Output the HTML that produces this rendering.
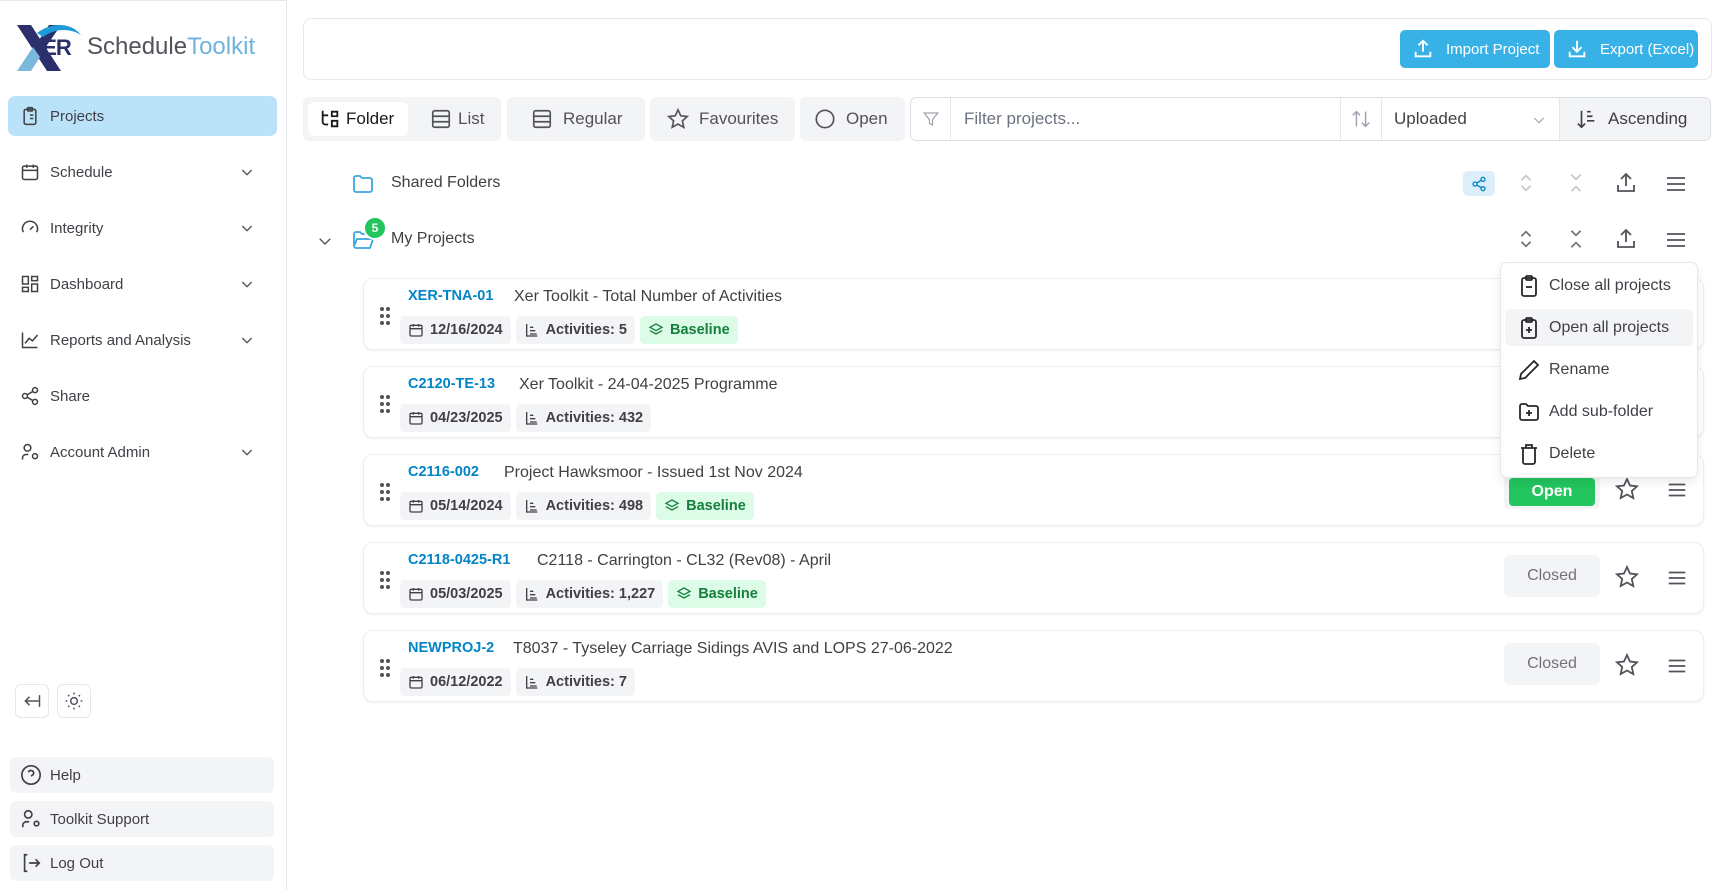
<!DOCTYPE html>
<html><head><meta charset="utf-8"><style>
*{box-sizing:border-box;margin:0;padding:0}
body{width:1724px;height:890px;background:#fff;font-family:"Liberation Sans",sans-serif;color:#3f3f46;position:relative;overflow:hidden}
.abs{position:absolute}
svg{display:block}
.side{position:absolute;left:0;top:0;width:287px;height:890px;border-right:1px solid #e5e7eb;border-top:1px solid #e5e7eb}
.nav{position:absolute;left:8px;width:269px;height:40px;display:flex;align-items:center;padding-left:12px;font-size:15px;color:#3f3f46}
.nav svg{margin-right:10px}
.chev{position:absolute;right:12px;top:12px}
.bot{position:absolute;left:10px;width:264px;height:36px;background:#f3f4f6;border-radius:6px;display:flex;align-items:center;padding-left:10px;font-size:15px}
.bot svg{margin-right:8px}
.tb{position:absolute;top:97px;height:44px;background:#f3f4f6;border-radius:6px;display:flex;align-items:center;font-size:17px;color:#52525b}
.card{position:absolute;left:363px;width:1341px;height:72px;border:1px solid #eceef1;border-radius:10px;box-shadow:0 1px 2px rgba(0,0,0,.06);background:#fff}
.code{position:absolute;left:44px;top:9px;font-size:14.5px;font-weight:bold;color:#0284c7}
.title{position:absolute;top:9px;font-size:16px;color:#3f3f46}
.chips{position:absolute;left:36px;top:37px;display:flex;gap:5px}
.chip{height:28px;background:#f3f4f6;border-radius:5px;padding:0 8px;display:flex;align-items:center;font-size:14.5px;font-weight:bold;color:#3f3f46;gap:6px}
.chip.g{background:#dcfce7;color:#15803d}
.drag{position:absolute;left:15px;top:27px}
.stat{position:absolute;left:1140px;top:12px;width:96px;height:42px;border-radius:6px;background:#f3f4f6;display:flex;align-items:center;justify-content:center;font-size:16px;color:#71717a}
.star{position:absolute;left:1251px;top:22px}
.menu{position:absolute;left:1302px;top:24px}
.mi{position:absolute;left:1505px;width:188px;height:37px;display:flex;align-items:center;padding-left:12px;font-size:16px;color:#3f3f46;border-radius:5px}
.mi svg{margin-right:8px}
</style></head><body>

<div class="side">
  <div class="abs" style="left:15px;top:22px">
    <svg width="70" height="50" viewBox="0 0 70 50">
      <path d="M2 2h14l30 46H32z" fill="#2b2f6b"/>
      <path d="M2 48l16-24 7 10-9 14z" fill="#7ab8dc"/>
      <path d="M22 20 34 2h12L28 28z" fill="#2b2f6b"/>
      <path d="M22 10C35 0 55 -2 66 12C55 5 40 5 28 14z" fill="#1e9ad6"/>
    </svg>
  </div>
  <div class="abs" style="left:32px;top:34px;font-size:22px;font-weight:bold;color:#2b2f6b;letter-spacing:-1px">&nbsp;&nbsp;ER</div>
  <div class="abs" style="left:87px;top:32px;font-size:24px;color:#52525b">Schedule<span style="color:#6fb3dc">Toolkit</span></div>

  <div class="nav" style="top:95px;background:#bae2f8;border-radius:7px;height:40px">
    <svg width="20" height="20" viewBox="0 0 24 24" fill="none" stroke="#3f3f46" stroke-width="1.8"><rect x="5" y="4" width="14" height="18" rx="2"/><rect x="9" y="2" width="6" height="4" rx="1"/><path d="M9 11h.01M12 11h4M9 15h.01M12 15h4"/></svg>Projects</div>
  <div class="nav" style="top:151px"><svg width="20" height="20" viewBox="0 0 24 24" fill="none" stroke="#3f3f46" stroke-width="1.8"><rect x="3" y="5" width="18" height="16" rx="2"/><path d="M3 10h18M8 3v4M16 3v4"/></svg>Schedule<svg class="chev" width="16" height="16" viewBox="0 0 24 24" fill="none" stroke="#52525b" stroke-width="2"><path d="M5 9l7 7 7-7"/></svg></div>
  <div class="nav" style="top:207px"><svg width="20" height="20" viewBox="0 0 24 24" fill="none" stroke="#3f3f46" stroke-width="1.8"><path d="M4 17a9 9 0 1 1 16 0"/><path d="M12 14l4-4"/></svg>Integrity<svg class="chev" width="16" height="16" viewBox="0 0 24 24" fill="none" stroke="#52525b" stroke-width="2"><path d="M5 9l7 7 7-7"/></svg></div>
  <div class="nav" style="top:263px"><svg width="20" height="20" viewBox="0 0 24 24" fill="none" stroke="#3f3f46" stroke-width="1.8"><rect x="3" y="3" width="7" height="9"/><rect x="14" y="3" width="7" height="5"/><rect x="14" y="12" width="7" height="9"/><rect x="3" y="16" width="7" height="5"/></svg>Dashboard<svg class="chev" width="16" height="16" viewBox="0 0 24 24" fill="none" stroke="#52525b" stroke-width="2"><path d="M5 9l7 7 7-7"/></svg></div>
  <div class="nav" style="top:319px"><svg width="20" height="20" viewBox="0 0 24 24" fill="none" stroke="#3f3f46" stroke-width="1.8"><path d="M3 3v18h18"/><path d="M6 16l5-6 4 3 6-7"/></svg>Reports and Analysis<svg class="chev" width="16" height="16" viewBox="0 0 24 24" fill="none" stroke="#52525b" stroke-width="2"><path d="M5 9l7 7 7-7"/></svg></div>
  <div class="nav" style="top:375px"><svg width="20" height="20" viewBox="0 0 24 24" fill="none" stroke="#3f3f46" stroke-width="1.8"><circle cx="18" cy="5" r="3"/><circle cx="6" cy="12" r="3"/><circle cx="18" cy="19" r="3"/><path d="M8.6 13.5l6.8 4M15.4 6.5l-6.8 4"/></svg>Share</div>
  <div class="nav" style="top:431px"><svg width="20" height="20" viewBox="0 0 24 24" fill="none" stroke="#3f3f46" stroke-width="1.8"><circle cx="9" cy="7" r="4"/><path d="M3 21v-2a4 4 0 0 1 4-4h3"/><circle cx="18" cy="17" r="3"/></svg>Account Admin<svg class="chev" width="16" height="16" viewBox="0 0 24 24" fill="none" stroke="#52525b" stroke-width="2"><path d="M5 9l7 7 7-7"/></svg></div>

  <div class="abs" style="left:15px;top:683px;width:34px;height:34px;border:1px solid #e5e7eb;border-radius:6px;display:flex;align-items:center;justify-content:center"><svg width="20" height="20" viewBox="0 0 24 24" fill="none" stroke="#52525b" stroke-width="1.8"><path d="M20 12H4M9 7l-5 5 5 5M21 5v14"/></svg></div>
  <div class="abs" style="left:57px;top:683px;width:34px;height:34px;border:1px solid #e5e7eb;border-radius:6px;display:flex;align-items:center;justify-content:center"><svg width="20" height="20" viewBox="0 0 24 24" fill="none" stroke="#52525b" stroke-width="1.8"><circle cx="12" cy="12" r="4"/><path d="M12 2v2M12 20v2M4.9 4.9l1.4 1.4M17.7 17.7l1.4 1.4M2 12h2M20 12h2M4.9 19.1l1.4-1.4M17.7 6.3l1.4-1.4"/></svg></div>

  <div class="bot" style="top:756px"><svg width="22" height="22" viewBox="0 0 24 24" fill="none" stroke="#3f3f46" stroke-width="1.8"><circle cx="12" cy="12" r="10"/><path d="M9.1 9a3 3 0 0 1 5.8 1c0 2-3 3-3 3M12 17h.01"/></svg>Help</div>
  <div class="bot" style="top:800px"><svg width="22" height="22" viewBox="0 0 24 24" fill="none" stroke="#3f3f46" stroke-width="1.8"><circle cx="9" cy="7" r="4"/><path d="M3 21v-2a4 4 0 0 1 4-4h3"/><circle cx="18" cy="17" r="2.5"/></svg>Toolkit Support</div>
  <div class="bot" style="top:844px"><svg width="22" height="22" viewBox="0 0 24 24" fill="none" stroke="#3f3f46" stroke-width="1.8"><path d="M8 3H5v18h3M10 12h11M17 8l4 4-4 4"/></svg>Log Out</div>
</div>

<!-- top panel -->
<div class="abs" style="left:303px;top:18px;width:1409px;height:62px;border:1px solid #e5e7eb;border-radius:8px"></div>
<div class="abs" style="left:1400px;top:30px;width:150px;height:38px;background:#38b2e6;border-radius:5px;color:#fff;font-size:15px;display:flex;align-items:center;padding-left:12px;gap:12px"><svg width="22" height="22" viewBox="0 0 24 24" fill="none" stroke="#fff" stroke-width="2"><path d="M4 15v5h16v-5M12 15V3M7 8l5-5 5 5"/></svg>Import Project</div>
<div class="abs" style="left:1554px;top:30px;width:144px;height:38px;background:#38b2e6;border-radius:5px;color:#fff;font-size:15px;display:flex;align-items:center;padding-left:12px;gap:12px"><svg width="22" height="22" viewBox="0 0 24 24" fill="none" stroke="#fff" stroke-width="2"><path d="M4 15v5h16v-5M12 3v12M7 10l5 5 5-5"/></svg>Export (Excel)</div>

<!-- toolbar -->
<div class="tb" style="left:303px;width:198px">
  <div style="position:absolute;left:5px;top:5px;width:100px;height:34px;background:#fff;border-radius:6px"></div>
  <div style="position:absolute;left:16px;top:11px;display:flex;align-items:center;gap:5px;color:#18181b"><svg width="22" height="22" viewBox="0 0 24 24" fill="none" stroke="#18181b" stroke-width="2"><path d="M4 3v12a3 3 0 0 0 3 3h3M4 8h6M14 4h6v5h-6zM14 14h6v6h-6z"/></svg>Folder</div>
  <div style="position:absolute;left:127px;top:11px;display:flex;align-items:center;gap:6px"><svg width="22" height="22" viewBox="0 0 24 24" fill="none" stroke="#52525b" stroke-width="1.8"><rect x="3" y="3" width="18" height="18" rx="2"/><path d="M3 9h18M3 15h18"/></svg>List</div>
</div>
<div class="tb" style="left:507px;width:138px;padding-left:24px;gap:10px"><svg width="22" height="22" viewBox="0 0 24 24" fill="none" stroke="#52525b" stroke-width="1.8"><rect x="3" y="3" width="18" height="18" rx="2"/><path d="M3 9h18M3 15h18"/></svg>Regular</div>
<div class="tb" style="left:650px;width:145px;padding-left:17px;gap:10px"><svg width="22" height="22" viewBox="0 0 24 24" fill="none" stroke="#52525b" stroke-width="1.8"><path d="M12 2l3 6.5 7 .8-5.2 4.8 1.5 7L12 17.5 5.7 21l1.5-7L2 9.3l7-.8z"/></svg>Favourites</div>
<div class="tb" style="left:800px;width:105px;padding-left:14px;gap:10px"><svg width="22" height="22" viewBox="0 0 24 24" fill="none" stroke="#52525b" stroke-width="1.8"><circle cx="12" cy="12" r="9.5"/></svg>Open</div>

<div class="abs" style="left:910px;top:97px;width:801px;height:44px;border:1px solid #dcdfe3;border-radius:6px;overflow:hidden;font-size:17px">
  <div class="abs" style="left:0;top:0;width:40px;height:42px;border-right:1px solid #e5e7eb;display:flex;align-items:center;justify-content:center"><svg width="18" height="18" viewBox="0 0 24 24" fill="none" stroke="#9ca3af" stroke-width="1.6"><path d="M3 4h18l-7 9v7l-4-2v-5z"/></svg></div>
  <div class="abs" style="left:53px;top:11px;color:#6b7280">Filter projects...</div>
  <div class="abs" style="left:429px;top:0;width:42px;height:42px;border-left:1px solid #e5e7eb;border-right:1px solid #e5e7eb;display:flex;align-items:center;justify-content:center"><svg width="22" height="22" viewBox="0 0 24 24" fill="none" stroke="#9ca3af" stroke-width="1.6"><path d="M7 20V4M3 8l4-4 4 4M17 4v16M13 16l4 4 4-4"/></svg></div>
  <div class="abs" style="left:483px;top:11px;color:#3f3f46">Uploaded</div>
  <svg class="abs" style="left:620px;top:14px" width="16" height="16" viewBox="0 0 24 24" fill="none" stroke="#9ca3af" stroke-width="1.8"><path d="M5 9l7 7 7-7"/></svg>
  <div class="abs" style="left:648px;top:0;width:153px;height:42px;background:#f3f4f6;border-left:1px solid #e5e7eb;display:flex;align-items:center;padding-left:16px;gap:10px;color:#3f3f46"><svg width="22" height="22" viewBox="0 0 24 24" fill="none" stroke="#3f3f46" stroke-width="1.8"><path d="M6 3v18M2 17l4 4 4-4M12 4h4M12 9h6M12 14h8"/></svg>Ascending</div>
</div>

<!-- folder rows -->
<svg class="abs" style="left:351px;top:172px" width="24" height="24" viewBox="0 0 24 24" fill="none" stroke="#3aa6dc" stroke-width="1.8"><path d="M3 6a2 2 0 0 1 2-2h4l2 2h8a2 2 0 0 1 2 2v10a2 2 0 0 1-2 2H5a2 2 0 0 1-2-2z"/></svg>
<div class="abs" style="left:391px;top:174px;font-size:16px;color:#3f3f46">Shared Folders</div>
<div class="abs" style="left:1463px;top:171px;width:32px;height:25px;background:#dbeefa;border-radius:5px;display:flex;align-items:center;justify-content:center"><svg width="16" height="16" viewBox="0 0 24 24" fill="none" stroke="#0284c7" stroke-width="2"><circle cx="18" cy="5" r="3"/><circle cx="6" cy="12" r="3"/><circle cx="18" cy="19" r="3"/><path d="M8.6 13.5l6.8 4M15.4 6.5l-6.8 4"/></svg></div>

<svg class="abs" style="left:316px;top:232px" width="18" height="18" viewBox="0 0 24 24" fill="none" stroke="#52525b" stroke-width="1.8"><path d="M5 9l7 7 7-7"/></svg>
<svg class="abs" style="left:351px;top:228px" width="24" height="24" viewBox="0 0 24 24" fill="none" stroke="#3aa6dc" stroke-width="1.8"><path d="M3 18V6a2 2 0 0 1 2-2h4l2 2h7a2 2 0 0 1 2 2v2M3 18l3-7h16l-3 9H5a2 2 0 0 1-2-2z"/></svg>
<div class="abs" style="left:363px;top:216px;width:24px;height:24px;border-radius:50%;background:#22c55e;border:2px solid #fff;color:#fff;font-size:12px;font-weight:bold;display:flex;align-items:center;justify-content:center">5</div>
<div class="abs" style="left:391px;top:230px;font-size:16px;color:#3f3f46">My Projects</div>

<!-- row icons -->
<svg class="abs" style="left:1515px;top:172px" width="22" height="22" viewBox="0 0 24 24" fill="none" stroke="#c4c7cc" stroke-width="1.8"><path d="M7 9l5-5 5 5M7 15l5 5 5-5"/></svg>
<svg class="abs" style="left:1565px;top:172px" width="22" height="22" viewBox="0 0 24 24" fill="none" stroke="#c4c7cc" stroke-width="1.8"><path d="M7 3l5 5 5-5M7 21l5-5 5 5"/></svg>
<svg class="abs" style="left:1614px;top:171px" width="24" height="24" viewBox="0 0 24 24" fill="none" stroke="#52525b" stroke-width="1.8"><path d="M4 14v6h16v-6M12 15V3M7 8l5-5 5 5"/></svg>
<svg class="abs" style="left:1664px;top:172px" width="24" height="24" viewBox="0 0 24 24" fill="none" stroke="#52525b" stroke-width="1.8"><path d="M3 6h18M3 12h18M3 18h18"/></svg>

<svg class="abs" style="left:1515px;top:228px" width="22" height="22" viewBox="0 0 24 24" fill="none" stroke="#71717a" stroke-width="1.8"><path d="M7 9l5-5 5 5M7 15l5 5 5-5"/></svg>
<svg class="abs" style="left:1565px;top:228px" width="22" height="22" viewBox="0 0 24 24" fill="none" stroke="#71717a" stroke-width="1.8"><path d="M7 3l5 5 5-5M7 21l5-5 5 5"/></svg>
<svg class="abs" style="left:1614px;top:227px" width="24" height="24" viewBox="0 0 24 24" fill="none" stroke="#52525b" stroke-width="1.8"><path d="M4 14v6h16v-6M12 15V3M7 8l5-5 5 5"/></svg>
<svg class="abs" style="left:1664px;top:228px" width="24" height="24" viewBox="0 0 24 24" fill="none" stroke="#52525b" stroke-width="1.8"><path d="M3 6h18M3 12h18M3 18h18"/></svg>

<!-- cards -->
<div class="card" style="top:278px">
  <svg class="drag" width="12" height="20" viewBox="0 0 12 20" fill="#52525b"><circle cx="3" cy="3" r="2"/><circle cx="9" cy="3" r="2"/><circle cx="3" cy="10" r="2"/><circle cx="9" cy="10" r="2"/><circle cx="3" cy="17" r="2"/><circle cx="9" cy="17" r="2"/></svg>
  <div class="code">XER-TNA-01</div><div class="title" style="left:150px">Xer Toolkit - Total Number of Activities</div>
  <div class="chips"><div class="chip"><svg width="16" height="16" viewBox="0 0 24 24" fill="none" stroke="#3f3f46" stroke-width="2"><rect x="3" y="5" width="18" height="16" rx="2"/><path d="M3 10h18M8 3v4M16 3v4"/></svg>12/16/2024</div><div class="chip"><svg width="16" height="16" viewBox="0 0 24 24" fill="none" stroke="#3f3f46" stroke-width="2"><path d="M4 3v18h16M9 8h5M9 13h8M9 18h10"/></svg>Activities: 5</div><div class="chip g"><svg width="16" height="16" viewBox="0 0 24 24" fill="none" stroke="#15803d" stroke-width="2"><path d="M12 3l9 5-9 5-9-5zM3 13l9 5 9-5"/></svg>Baseline</div></div>
</div>
<div class="card" style="top:366px">
  <svg class="drag" width="12" height="20" viewBox="0 0 12 20" fill="#52525b"><circle cx="3" cy="3" r="2"/><circle cx="9" cy="3" r="2"/><circle cx="3" cy="10" r="2"/><circle cx="9" cy="10" r="2"/><circle cx="3" cy="17" r="2"/><circle cx="9" cy="17" r="2"/></svg>
  <div class="code">C2120-TE-13</div><div class="title" style="left:155px">Xer Toolkit - 24-04-2025 Programme</div>
  <div class="chips"><div class="chip"><svg width="16" height="16" viewBox="0 0 24 24" fill="none" stroke="#3f3f46" stroke-width="2"><rect x="3" y="5" width="18" height="16" rx="2"/><path d="M3 10h18M8 3v4M16 3v4"/></svg>04/23/2025</div><div class="chip"><svg width="16" height="16" viewBox="0 0 24 24" fill="none" stroke="#3f3f46" stroke-width="2"><path d="M4 3v18h16M9 8h5M9 13h8M9 18h10"/></svg>Activities: 432</div></div>
</div>
<div class="card" style="top:454px">
  <svg class="drag" width="12" height="20" viewBox="0 0 12 20" fill="#52525b"><circle cx="3" cy="3" r="2"/><circle cx="9" cy="3" r="2"/><circle cx="3" cy="10" r="2"/><circle cx="9" cy="10" r="2"/><circle cx="3" cy="17" r="2"/><circle cx="9" cy="17" r="2"/></svg>
  <div class="code">C2116-002</div><div class="title" style="left:140px">Project Hawksmoor - Issued 1st Nov 2024</div>
  <div class="chips"><div class="chip"><svg width="16" height="16" viewBox="0 0 24 24" fill="none" stroke="#3f3f46" stroke-width="2"><rect x="3" y="5" width="18" height="16" rx="2"/><path d="M3 10h18M8 3v4M16 3v4"/></svg>05/14/2024</div><div class="chip"><svg width="16" height="16" viewBox="0 0 24 24" fill="none" stroke="#3f3f46" stroke-width="2"><path d="M4 3v18h16M9 8h5M9 13h8M9 18h10"/></svg>Activities: 498</div><div class="chip g"><svg width="16" height="16" viewBox="0 0 24 24" fill="none" stroke="#15803d" stroke-width="2"><path d="M12 3l9 5-9 5-9-5zM3 13l9 5 9-5"/></svg>Baseline</div></div>
  <div class="stat" style="background:#f3f4f6"><div style="width:86px;height:28px;margin-top:8px;background:#22c55e;border-radius:4px;color:#fff;font-weight:bold;display:flex;align-items:center;justify-content:center">Open</div></div>
  <svg class="star" width="24" height="24" viewBox="0 0 24 24" fill="none" stroke="#52525b" stroke-width="1.8"><path d="M12 2l3 6.5 7 .8-5.2 4.8 1.5 7L12 17.5 5.7 21l1.5-7L2 9.3l7-.8z"/></svg>
  <svg class="menu" width="22" height="22" viewBox="0 0 24 24" fill="none" stroke="#52525b" stroke-width="1.8"><path d="M3 6h18M3 12h18M3 18h18"/></svg>
</div>
<div class="card" style="top:542px">
  <svg class="drag" width="12" height="20" viewBox="0 0 12 20" fill="#52525b"><circle cx="3" cy="3" r="2"/><circle cx="9" cy="3" r="2"/><circle cx="3" cy="10" r="2"/><circle cx="9" cy="10" r="2"/><circle cx="3" cy="17" r="2"/><circle cx="9" cy="17" r="2"/></svg>
  <div class="code">C2118-0425-R1</div><div class="title" style="left:173px">C2118 - Carrington - CL32 (Rev08) - April</div>
  <div class="chips"><div class="chip"><svg width="16" height="16" viewBox="0 0 24 24" fill="none" stroke="#3f3f46" stroke-width="2"><rect x="3" y="5" width="18" height="16" rx="2"/><path d="M3 10h18M8 3v4M16 3v4"/></svg>05/03/2025</div><div class="chip"><svg width="16" height="16" viewBox="0 0 24 24" fill="none" stroke="#3f3f46" stroke-width="2"><path d="M4 3v18h16M9 8h5M9 13h8M9 18h10"/></svg>Activities: 1,227</div><div class="chip g"><svg width="16" height="16" viewBox="0 0 24 24" fill="none" stroke="#15803d" stroke-width="2"><path d="M12 3l9 5-9 5-9-5zM3 13l9 5 9-5"/></svg>Baseline</div></div>
  <div class="stat">Closed</div>
  <svg class="star" width="24" height="24" viewBox="0 0 24 24" fill="none" stroke="#52525b" stroke-width="1.8"><path d="M12 2l3 6.5 7 .8-5.2 4.8 1.5 7L12 17.5 5.7 21l1.5-7L2 9.3l7-.8z"/></svg>
  <svg class="menu" width="22" height="22" viewBox="0 0 24 24" fill="none" stroke="#52525b" stroke-width="1.8"><path d="M3 6h18M3 12h18M3 18h18"/></svg>
</div>
<div class="card" style="top:630px">
  <svg class="drag" width="12" height="20" viewBox="0 0 12 20" fill="#52525b"><circle cx="3" cy="3" r="2"/><circle cx="9" cy="3" r="2"/><circle cx="3" cy="10" r="2"/><circle cx="9" cy="10" r="2"/><circle cx="3" cy="17" r="2"/><circle cx="9" cy="17" r="2"/></svg>
  <div class="code">NEWPROJ-2</div><div class="title" style="left:149px">T8037 - Tyseley Carriage Sidings AVIS and LOPS 27-06-2022</div>
  <div class="chips"><div class="chip"><svg width="16" height="16" viewBox="0 0 24 24" fill="none" stroke="#3f3f46" stroke-width="2"><rect x="3" y="5" width="18" height="16" rx="2"/><path d="M3 10h18M8 3v4M16 3v4"/></svg>06/12/2022</div><div class="chip"><svg width="16" height="16" viewBox="0 0 24 24" fill="none" stroke="#3f3f46" stroke-width="2"><path d="M4 3v18h16M9 8h5M9 13h8M9 18h10"/></svg>Activities: 7</div></div>
  <div class="stat">Closed</div>
  <svg class="star" width="24" height="24" viewBox="0 0 24 24" fill="none" stroke="#52525b" stroke-width="1.8"><path d="M12 2l3 6.5 7 .8-5.2 4.8 1.5 7L12 17.5 5.7 21l1.5-7L2 9.3l7-.8z"/></svg>
  <svg class="menu" width="22" height="22" viewBox="0 0 24 24" fill="none" stroke="#52525b" stroke-width="1.8"><path d="M3 6h18M3 12h18M3 18h18"/></svg>
</div>

<!-- dropdown menu -->
<div class="abs" style="left:1500px;top:262px;width:198px;height:216px;background:#fff;border:1px solid #e5e7eb;border-radius:7px;box-shadow:0 4px 10px rgba(0,0,0,.08)"></div>
<div class="mi" style="top:267px"><svg width="24" height="24" viewBox="0 0 24 24" fill="none" stroke="#27272a" stroke-width="1.8"><rect x="5" y="4" width="14" height="18" rx="2"/><rect x="9" y="2" width="6" height="4" rx="1"/><path d="M9 13h6"/></svg>Close all projects</div>
<div class="mi" style="top:309px;background:#f3f4f6"><svg width="24" height="24" viewBox="0 0 24 24" fill="none" stroke="#27272a" stroke-width="1.8"><rect x="5" y="4" width="14" height="18" rx="2"/><rect x="9" y="2" width="6" height="4" rx="1"/><path d="M9 14h6M12 11v6"/></svg>Open all projects</div>
<div class="mi" style="top:351px"><svg width="24" height="24" viewBox="0 0 24 24" fill="none" stroke="#27272a" stroke-width="1.8"><path d="M17 3l4 4L8 20l-5 1 1-5z"/></svg>Rename</div>
<div class="mi" style="top:393px"><svg width="24" height="24" viewBox="0 0 24 24" fill="none" stroke="#27272a" stroke-width="1.8"><path d="M3 6a2 2 0 0 1 2-2h4l2 2h8a2 2 0 0 1 2 2v10a2 2 0 0 1-2 2H5a2 2 0 0 1-2-2z"/><path d="M9 13h6M12 10v6"/></svg>Add sub-folder</div>
<div class="mi" style="top:435px"><svg width="24" height="24" viewBox="0 0 24 24" fill="none" stroke="#27272a" stroke-width="1.8"><path d="M4 6h16M6 6v14a2 2 0 0 0 2 2h8a2 2 0 0 0 2-2V6M9 6V3h6v3"/></svg>Delete</div>

</body></html>
